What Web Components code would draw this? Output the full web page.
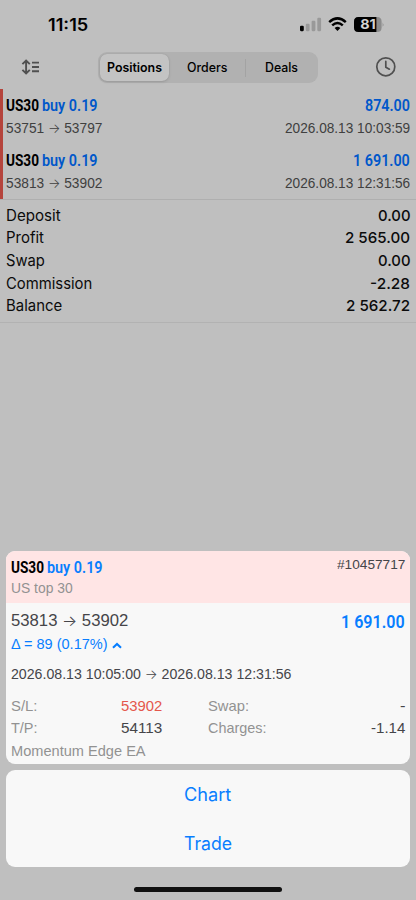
<!DOCTYPE html>
<html lang="en"><head><meta charset="utf-8"><title>Positions</title>
<style>html,body{margin:0;background:#bfbfbf}</style></head><body>
<trade-app></trade-app>
<script>
const define=(name,html,after)=>customElements.define(name,class extends HTMLElement{
  connectedCallback(){
    if(this.shadowRoot)return;
    const t=document.createElement('template');
    t.innerHTML=typeof html==='function'?html(this):html;
    this.attachShadow({mode:'open'}).append(t.content.cloneNode(true));
    if(after)after(this);
  }
});

// A single line of text set to a given advance width.
// kind: din (condensed), hel (grotesque), sf (interface)
define('fit-text',el=>{
  const k=el.getAttribute('kind')||'hel';
  const fam={din:'Roboto',hel:'"Liberation Sans"',sf:'Inter'}[k];
  return `<style>:host{display:block;flex:none;width:${el.getAttribute('w')}px;white-space:pre;font-family:${fam},sans-serif;font-size:${el.getAttribute('size')}px;font-weight:${el.getAttribute('weight')||400}}
  span{display:inline-block;transform-origin:0 50%}::slotted(b){font-family:Inter,sans-serif;font-weight:300;font-size:.95em;line-height:1}</style><span><slot></slot></span>`;
},el=>{
  const s=el.shadowRoot.querySelector('span'),w=+el.getAttribute('w');
  s.style.transform=`scaleX(${w/s.getBoundingClientRect().width})`;
});

define('status-bar',`<style>:host{display:flex;height:50px;box-sizing:border-box;padding:0 31px 0 47.5px;align-items:center;line-height:50px;color:#000}
svg{margin-left:auto;display:block}.b{font:700 13.6px Inter,sans-serif;fill:#d2d2d2}</style>
<fit-text kind="sf" size="16.7" weight="600" w="40.3">11:15</fit-text>
<svg width="86" height="18" viewBox="299 16 86 18">
<rect x="300" y="25.8" width="3.8" height="5.4" rx="1.1"/><g fill="#999"><rect x="305.8" y="23.7" width="3.8" height="7.5" rx="1.1"/><rect x="311.6" y="20.8" width="3.8" height="10.4" rx="1.1"/><rect x="317.3" y="17.8" width="3.8" height="13.4" rx="1.1"/></g>
<g fill="none" stroke="#000" stroke-width="2.5"><path d="M329.2 22.1Q337.5 14.6 345.8 22.1"/><path d="M332.2 25.4Q337.5 20.7 342.8 25.4"/></g><path d="M337.5 30.9L334.6 27.9Q337.5 25.6 340.4 27.9Z"/>
<path d="M358.4 17H377.2Q381.6 17 381.6 21.5V27.5Q381.6 32 377.2 32H358.4Q354 32 354 27.5V21.5Q354 17 358.4 17Z" fill="#8c8c8c"/><path d="M376.4 17H358.4Q354 17 354 21.5V27.5Q354 32 358.4 32H376.4Z"/><path d="M382.6 22.2Q384.4 24.5 382.6 26.8Z" fill="#8c8c8c"/>
<text class="b" x="360.2" y="29.4" textLength="15.6" lengthAdjust="spacingAndGlyphs">81</text></svg>`);

define('tab-control',`<style>:host{display:flex;box-sizing:border-box;width:220.5px;height:31px;border-radius:9px;background:#b1b1b1;padding:2px;line-height:28px;color:#000}
div{display:flex;justify-content:center;flex:1}.on{flex:0 0 69.6px;background:#c3c3c3;border-radius:7px;box-shadow:0 1px 3px #0002,0 0 1px #0002}
i{width:1px;height:18px;margin-top:4.5px;background:#a3a3a3}.o{flex:0 0 75.5px}.o,.l{padding-left:1px;box-sizing:border-box}</style>
<div class="on"><fit-text kind="sf" size="12.8" weight="600" w="55">Positions</fit-text></div><div class="o"><fit-text kind="sf" size="12.8" weight="500" w="40.4">Orders</fit-text></div><i></i><div class="l"><fit-text kind="sf" size="12.8" weight="500" w="33">Deals</fit-text></div>`);

define('nav-bar',`<style>:host{display:flex;box-sizing:border-box;height:38.5px;padding:2px 19px 0 21px}svg{display:block;fill:none;stroke:#505050}tab-control{margin-left:56.7px}.c{margin:4px 0 0 auto}.s{margin-top:5px}</style>
<svg class="s" width="20" height="20" viewBox="21 57 20 20" stroke-width="1.9"><path d="M26.1 60.8V73.2M22.4 64.2L26.1 60.5L29.8 64.2M22.4 69.8L26.1 73.5L29.8 69.8M32 62.6H39M32 67H39M32 71.2H39"/></svg>
<tab-control></tab-control>
<svg class="c" width="22" height="22" viewBox="375 56 22 22" stroke-width="1.7"><circle cx="385.8" cy="66.8" r="9"/><path d="M385.8 61.4V67.2L389.4 69.2" stroke-linecap="round" stroke-linejoin="round"/></svg>`);

define('deal-row',el=>{const a=n=>el.getAttribute(n);return `<style>:host{display:block;box-sizing:border-box;height:55.3px;padding:5px 6px 0 3px}
div{display:flex}.a{line-height:24px;color:#0057ca}.b{line-height:22.4px;color:#404040}.r{margin-left:auto}.u{color:#000;margin-right:3px}</style>
<div class="a"><fit-text class="u" kind="din" size="16.6" weight="700" w="33">US30</fit-text><fit-text kind="din" size="16.6" weight="600" w="55.6">buy 0.19</fit-text><fit-text class="r" kind="din" size="16.6" weight="600" w="${a('pw')}">${a('profit')}</fit-text></div>
<div class="b"><fit-text size="13.8" w="96.4">${a('from')} <b>→</b> ${a('to')}</fit-text><fit-text class="r" size="13.8" w="125.2">${a('time')}</fit-text></div>`});

define('deal-list',`<style>:host{display:flex;box-sizing:border-box;height:111px;border-bottom:1px solid #afafaf}i{width:3px;background:#b5443c}div{flex:1}</style>
<i></i><div><deal-row from="53751" to="53797" time="2026.08.13 10:03:59" profit="874.00" pw="45"></deal-row><deal-row from="53813" to="53902" time="2026.08.13 12:31:56" profit="1 691.00" pw="56.8"></deal-row></div>`);

define('sum-row',el=>{const a=n=>el.getAttribute(n);return `<style>:host{display:flex;justify-content:space-between;height:22.7px;line-height:22.7px;color:#0b0b0b}</style>
<fit-text kind="sf" size="15.2" w="${a('lw')}">${a('label')}</fit-text><fit-text kind="sf" size="15.2" weight="500" w="${a('vw')}">${a('value')}</fit-text>`});

define('sum-table',`<style>:host{display:block;box-sizing:border-box;height:123px;padding:5px 6px 0 5.5px;border-bottom:1px solid #b2b2b2}</style>
<sum-row label="Deposit" lw="54.7" value="0.00" vw="32.5"></sum-row><sum-row label="Profit" lw="38" value="2 565.00" vw="65"></sum-row><sum-row label="Swap" lw="38.9" value="0.00" vw="32.5"></sum-row><sum-row label="Commission" lw="86.3" value="-2.28" vw="40"></sum-row><sum-row label="Balance" lw="56.2" value="2 562.72" vw="64"></sum-row>`);

define('position-card',`<style>:host{display:block;height:213px;border-radius:9px;background:#f8f8f8;overflow:hidden;color:#454549}
header{background:#ffe5e5;height:51.5px;box-sizing:border-box;padding:5px 5px 0 4.5px}
.f{display:flex}.r{margin-left:auto}.blue{color:#087eff}.g{color:#929292}.red{color:#e4574c}.k{color:#000;margin-right:3.4px}
main{padding:0 5px 0 4.5px}
.t{display:grid;grid-template-columns:110px 41.5px 45.5px 1fr auto;line-height:22.7px}.t .r{justify-self:end}</style>
<header><div class="f" style="line-height:23px"><fit-text class="k" kind="din" size="16.6" weight="700" w="33">US30</fit-text><fit-text class="blue" kind="din" size="16.6" weight="600" w="55.6">buy 0.19</fit-text><fit-text class="r" size="13.7" style="line-height:18px" w="68.4">#10457717</fit-text></div>
<fit-text class="g" size="14" w="61.6" style="line-height:19px">US top 30</fit-text></header>
<main><div class="f" style="height:29.5px;line-height:35px"><fit-text size="16.4" w="117.3">53813 <b>→</b> 53902</fit-text><fit-text class="r blue" kind="din" size="17.8" weight="600" w="63.6" style="line-height:38.5px">1 691.00</fit-text></div>
<div class="f blue" style="height:27px;line-height:24px"><fit-text size="14.4" w="96.6">Δ = 89 (0.17%)</fit-text><svg style="display:block;margin:9.5px 0 0 4.5px" width="10" height="7" viewBox="0 0 10 7" fill="none" stroke="#087eff" stroke-width="2.1"><path d="M1 5.8L5 2L9 5.8"/></svg></div>
<fit-text size="13.8" w="280.5" style="line-height:31px">2026.08.13 10:05:00 <b>→</b> 2026.08.13 12:31:56</fit-text>
<div style="height:4.5px"></div>
<div class="t"><fit-text class="g" size="14.4" w="26.5">S/L:</fit-text><fit-text class="red" size="14.4" w="41.3">53902</fit-text><i></i><fit-text class="g" size="14.4" w="41">Swap:</fit-text><fit-text class="r" size="14.4" w="5.5">-</fit-text>
<fit-text class="g" size="14.4" w="26.5">T/P:</fit-text><fit-text size="14.4" w="41.3">54113</fit-text><i></i><fit-text class="g" size="14.4" w="58.5">Charges:</fit-text><fit-text class="r" size="14.4" w="34.3">-1.14</fit-text></div>
<fit-text class="g" size="14.4" w="134.6" style="line-height:22.4px">Momentum Edge EA</fit-text></main>`);

define('action-list',`<style>:host{display:flex;flex-direction:column;align-items:center;height:97px;border-radius:9px;background:#f8f8f8;margin-top:6px;line-height:48.5px;color:#087eff}</style>
<fit-text kind="sf" size="18.3" w="47.3">Chart</fit-text><fit-text kind="sf" size="18.3" w="48">Trade</fit-text>`);

define('trade-app',`<style>:host{display:flex;flex-direction:column;width:416px;height:900px;background:#bfbfbf;overflow:hidden}
.sheet{margin:auto 6px 0}.home{width:148.5px;height:5px;border-radius:3px;background:#111;margin:20px auto 8px}</style>
<status-bar></status-bar><nav-bar></nav-bar><deal-list></deal-list><sum-table></sum-table>
<div class="sheet"><position-card></position-card><action-list></action-list></div><div class="home"></div>`);
</script></body></html>
